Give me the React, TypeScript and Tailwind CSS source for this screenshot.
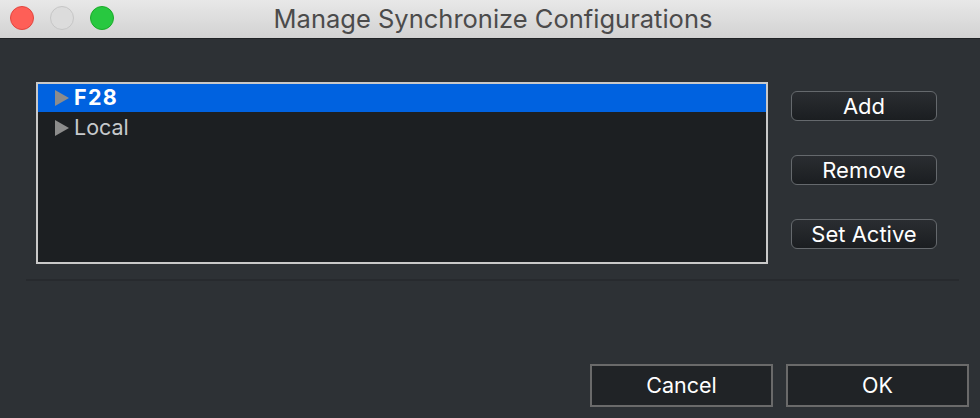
import React from 'react';

// --- Dialog: Manage Synchronize Configurations ---

const font = { fontFamily: 'Inter, "Noto Sans", sans-serif' };

const SideButton = ({ label }: { label: string }) => (
  <button className="h-[30px] w-[146px] rounded-[6px] border border-[#65696d] bg-gradient-to-b from-[#2a2d31] to-[#1b1e21] text-[22px] leading-none text-white">
    {label}
  </button>
);

const FooterButton = ({ label }: { label: string }) => (
  <button className="h-[43px] w-[183px] border-2 border-[#6a6a6a] bg-[#202326] text-[21.5px] text-white">
    {label}
  </button>
);

const Row = ({ label, selected }: { label: string; selected?: boolean }) => (
  <div className={`flex h-[28px] items-center pl-[17px] ${selected ? 'bg-[#0062e0]' : ''}`}>
    <svg width="15" height="16" viewBox="0 0 15 16" className="mr-[4px] shrink-0">
      <polygon points="0,0 14,8 0,16" fill="#8c8c8c" />
    </svg>
    <span
      className={`text-[21.5px] leading-none ${
        selected ? 'font-bold tracking-[0.06em] text-white' : 'text-[#c6c9cc]'
      }`}
    >
      {label}
    </span>
  </div>
);

export default function App() {
  return (
    <div className="flex h-[418px] w-[980px] flex-col bg-[#2d3135]" style={font}>
      {/* title bar */}
      <div className="relative flex h-[39px] shrink-0 items-center justify-center border-b border-[#1f2225] bg-gradient-to-b from-[#e8e8e8] to-[#d2d2d2]">
        <div className="absolute left-[10px] top-[6px] flex gap-[16px]">
          <div className="h-[24px] w-[24px] rounded-full border border-[#e2463f] bg-[#fe5f57]" />
          <div className="h-[24px] w-[24px] rounded-full border border-[#c6c6c6] bg-[#dcdcdc]" />
          <div className="h-[24px] w-[24px] rounded-full border border-[#1aab29] bg-[#28c840]" />
        </div>
        <span className="pl-[6px] text-[25.5px] text-[#4b4b4b]">Manage Synchronize Configurations</span>
      </div>

      {/* content */}
      <div className="flex pl-[36px] pt-[43px]">
        <div className="h-[182px] w-[732px] border-2 border-[#c9c9c9] bg-[#1c1f22]">
          <Row label="F28" selected />
          <div className="mt-[2px]">
            <Row label="Local" />
          </div>
        </div>
        <div className="ml-[23px] mt-[9px] flex flex-col gap-[34px]">
          <SideButton label="Add" />
          <SideButton label="Remove" />
          <SideButton label="Set Active" />
        </div>
      </div>

      <div className="mx-[26px] mt-[15px] h-[2px] w-[933px] bg-[#272a2e]" />

      <div className="mt-[83px] flex justify-end gap-[13px] pr-[11px]">
        <FooterButton label="Cancel" />
        <FooterButton label="OK" />
      </div>
    </div>
  );
}
